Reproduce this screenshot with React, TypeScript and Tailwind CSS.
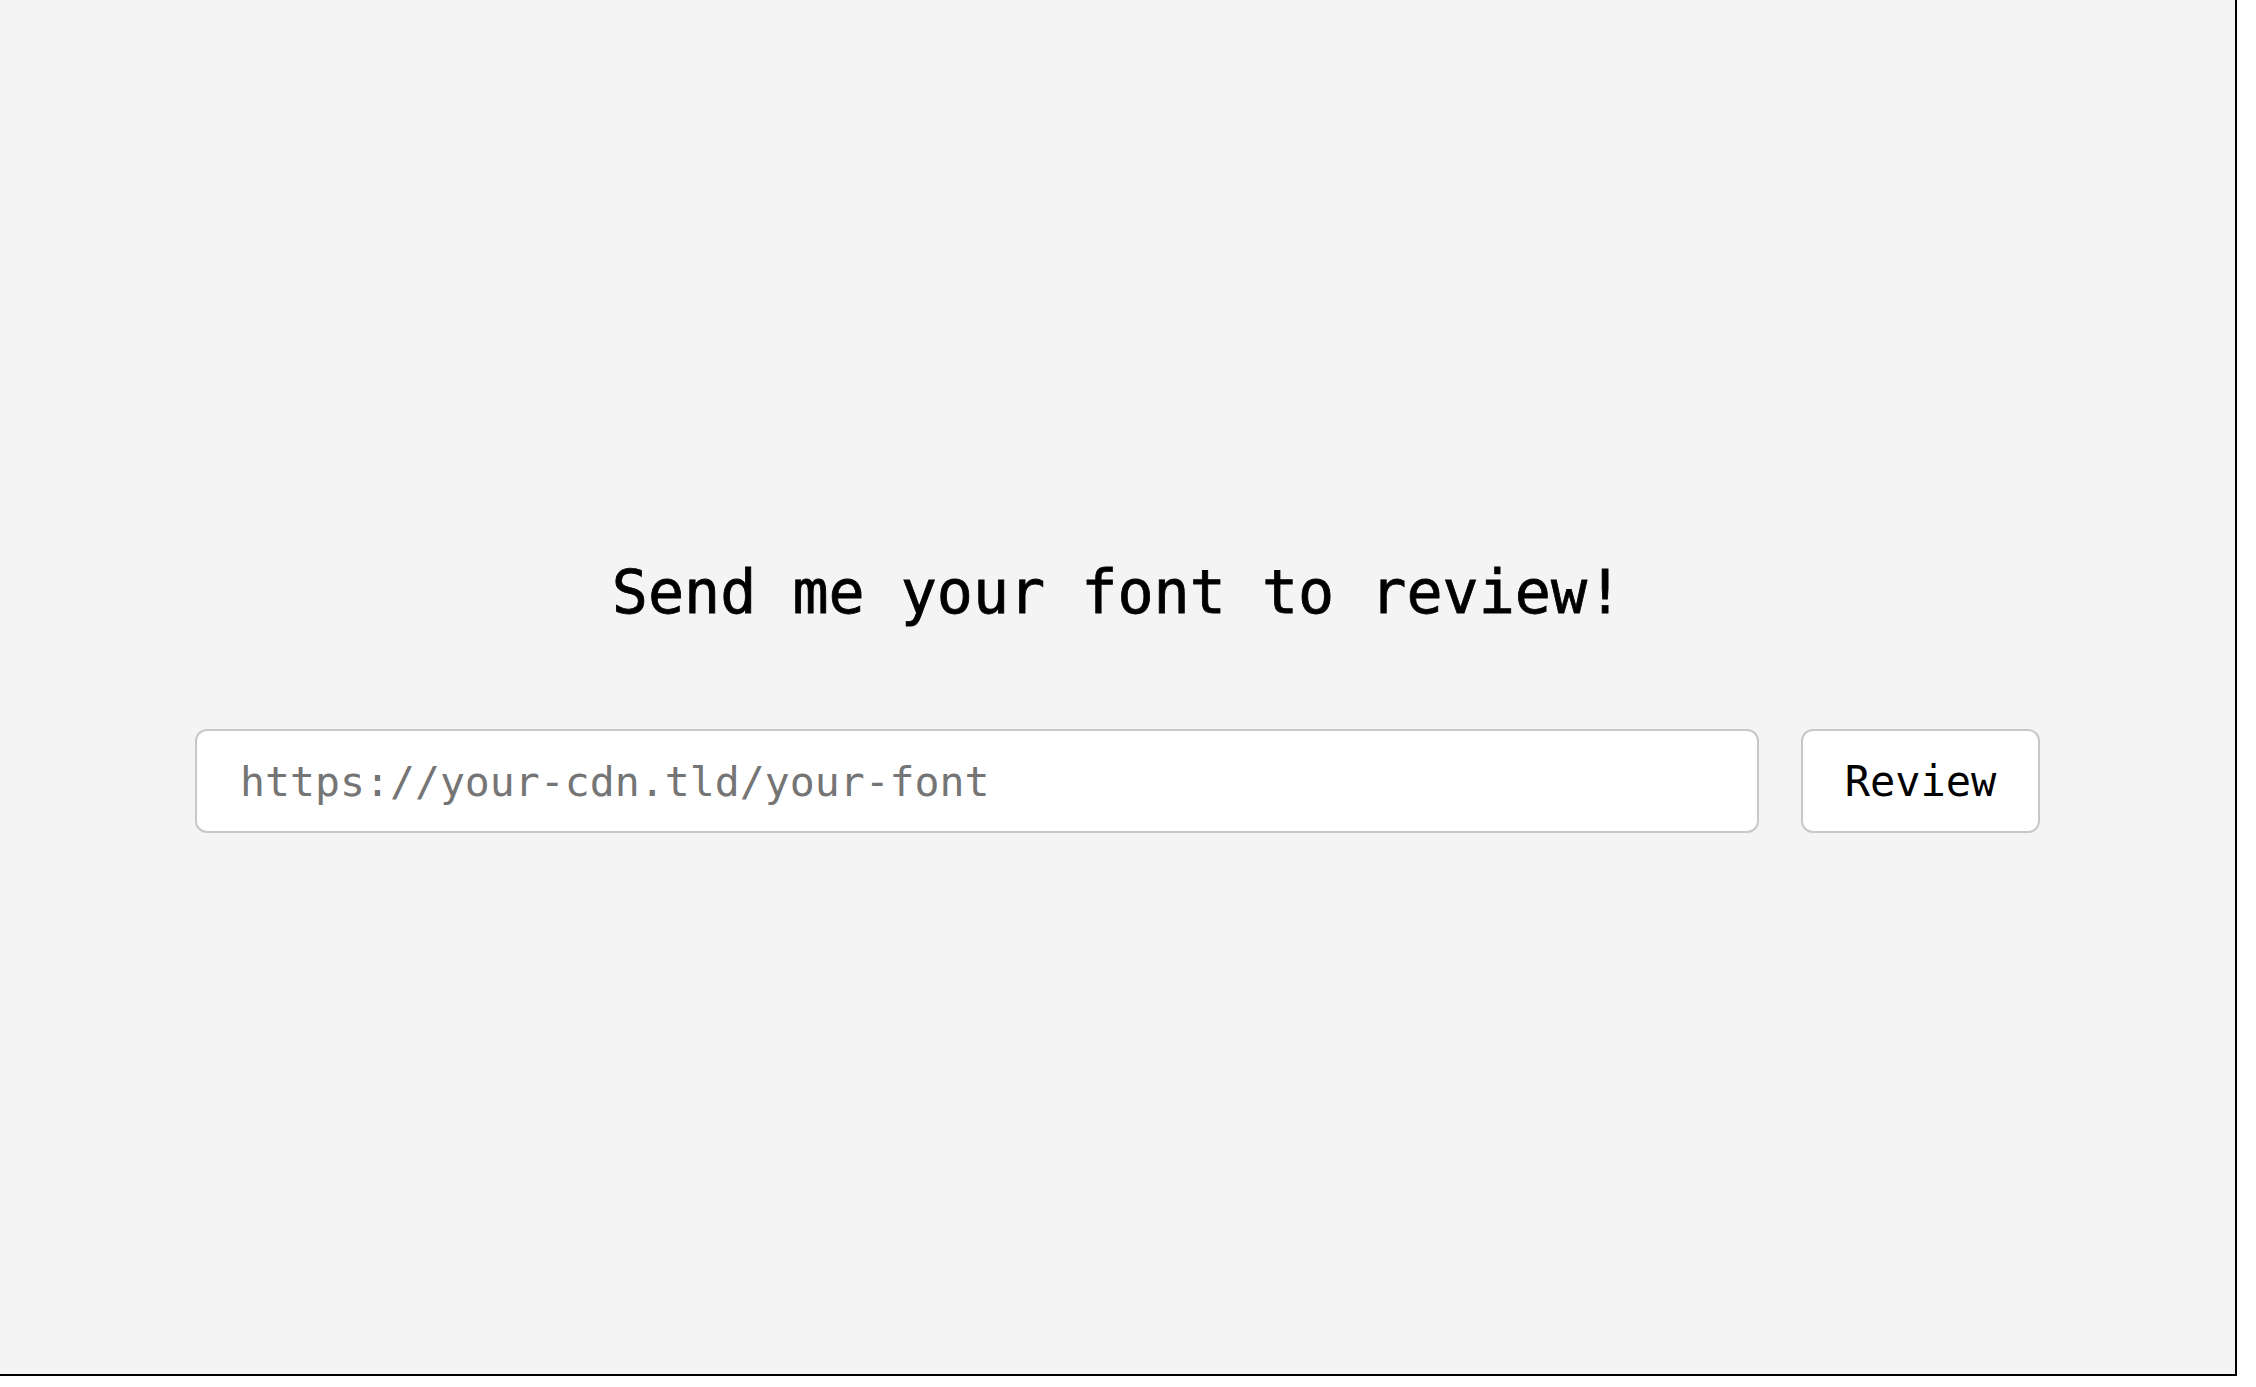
import React, { useState } from 'react';

const mono = { fontFamily: '"DejaVu Sans Mono", "Liberation Mono", monospace' };

const App: React.FC = () => {
  const [url, setUrl] = useState('');

  return (
    <div className="w-full h-screen bg-white overflow-hidden">
      <div
        className="w-[2237px] h-[1376px] bg-[#f4f4f4] border-r-2 border-b-2 border-black flex flex-col items-center justify-center pt-[15px]"
        style={mono}
      >
        <h1 className="h-[72px] leading-[72px] text-[60px] font-normal text-black text-center [-webkit-text-stroke:0.8px_black]">
          Send me your font to review!
        </h1>
        <form
          className="w-full px-[195px] mt-[101px] flex items-center"
          onSubmit={(e) => e.preventDefault()}
        >
          <input
            type="text"
            value={url}
            onChange={(e) => setUrl(e.target.value)}
            placeholder="https://your-cdn.tld/your-font"
            className="flex-1 h-[104px] bg-white border-2 border-[#c8c8c8] rounded-[12px] pl-[43px] pr-4 text-[41.5px] text-black placeholder:text-[#757575] outline-none"
            style={mono}
          />
          <button
            type="submit"
            className="ml-[42px] w-[239px] h-[104px] bg-white border-2 border-[#c8c8c8] rounded-[12px] text-[42px] text-black"
            style={mono}
          >
            Review
          </button>
        </form>
      </div>
    </div>
  );
};

export default App;
